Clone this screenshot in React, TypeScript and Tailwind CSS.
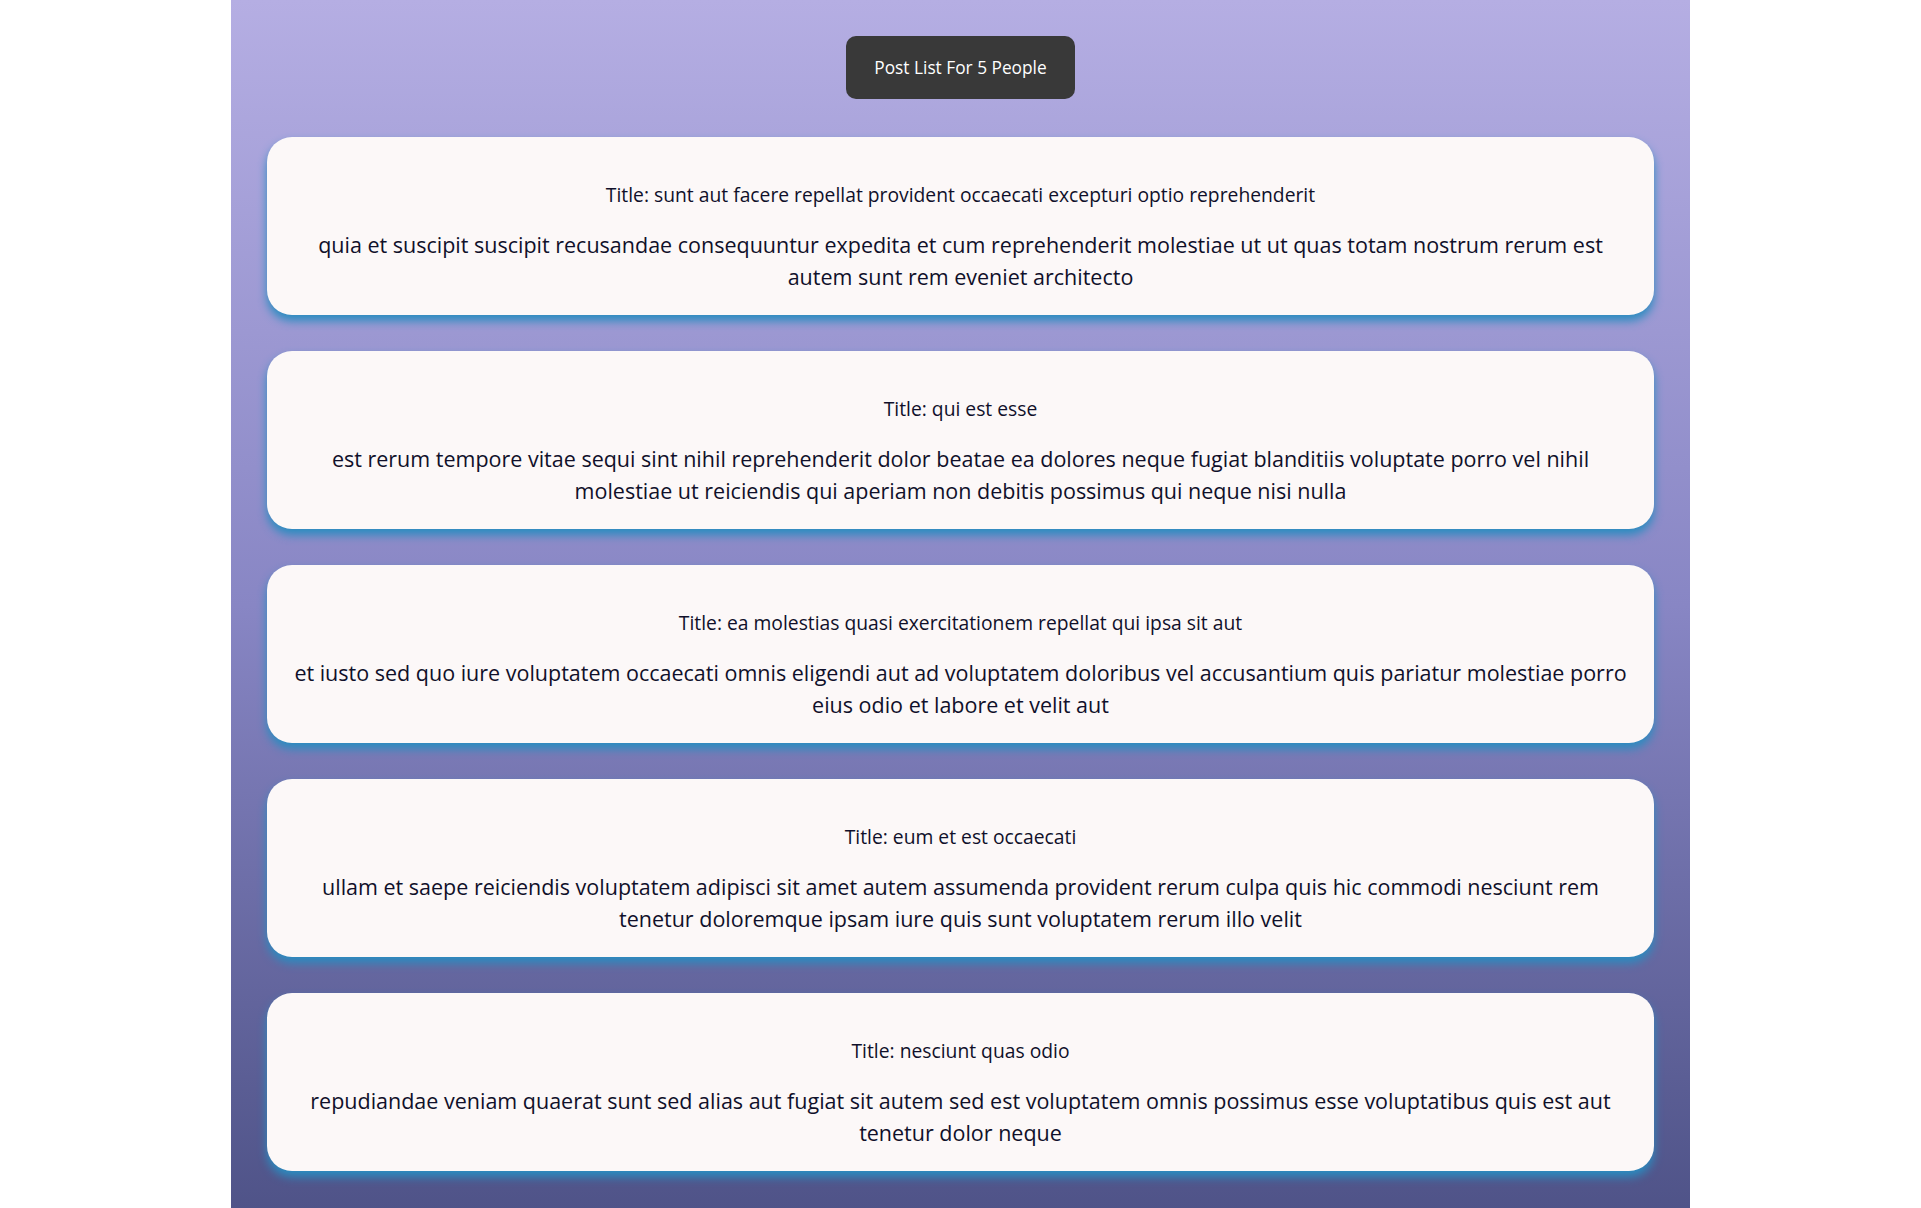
const posts = [
  {
    id: 1,
    title: 'sunt aut facere repellat provident occaecati excepturi optio reprehenderit',
    body: 'quia et suscipit suscipit recusandae consequuntur expedita et cum reprehenderit molestiae ut ut quas totam nostrum rerum est autem sunt rem eveniet architecto'
  },
  {
    id: 2,
    title: 'qui est esse',
    body: 'est rerum tempore vitae sequi sint nihil reprehenderit dolor beatae ea dolores neque fugiat blanditiis voluptate porro vel nihil molestiae ut reiciendis qui aperiam non debitis possimus qui neque nisi nulla'
  },
  {
    id: 3,
    title: 'ea molestias quasi exercitationem repellat qui ipsa sit aut',
    body: 'et iusto sed quo iure voluptatem occaecati omnis eligendi aut ad voluptatem doloribus vel accusantium quis pariatur molestiae porro eius odio et labore et velit aut'
  },
  {
    id: 4,
    title: 'eum et est occaecati',
    body: 'ullam et saepe reiciendis voluptatem adipisci sit amet autem assumenda provident rerum culpa quis hic commodi nesciunt rem tenetur doloremque ipsam iure quis sunt voluptatem rerum illo velit'
  },
  {
    id: 5,
    title: 'nesciunt quas odio',
    body: 'repudiandae veniam quaerat sunt sed alias aut fugiat sit autem sed est voluptatem omnis possimus esse voluptatibus quis est aut tenetur dolor neque'
  }
]

const PostCard = ({ title, body }: { title: string; body: string }) => {
  return (
    <div className="w-[95%] mx-auto rounded-[25px] bg-[#fcf8f8] px-5 pt-[44px] pb-[22px] text-center text-[#10102a] shadow-[0_6px_10px_#2a8cc0]">
      <h3 className="text-[19.3px] leading-[28px]">Title: {title}</h3>
      <p className="mt-5 text-[21.5px] leading-[32px]">{body}</p>
    </div>
  )
}

export default function App() {
  return (
    <div className="min-h-screen bg-white" style={{ fontFamily: '"Open Sans", sans-serif' }}>
      <div className="w-[76%] mx-auto min-h-screen bg-gradient-to-b from-[#b5aee3] via-[#8886c4] to-[#4f5388] pt-9 pb-10">
        <div className="flex justify-center">
          <button className="h-[63px] px-7 rounded-[10px] bg-[#393939] text-white text-[17.3px]">
            Post List For 5 People
          </button>
        </div>
        <div className="mt-[38px] flex flex-col gap-9">
          {posts.map((post) => (
            <PostCard key={post.id} title={post.title} body={post.body} />
          ))}
        </div>
      </div>
    </div>
  )
}
